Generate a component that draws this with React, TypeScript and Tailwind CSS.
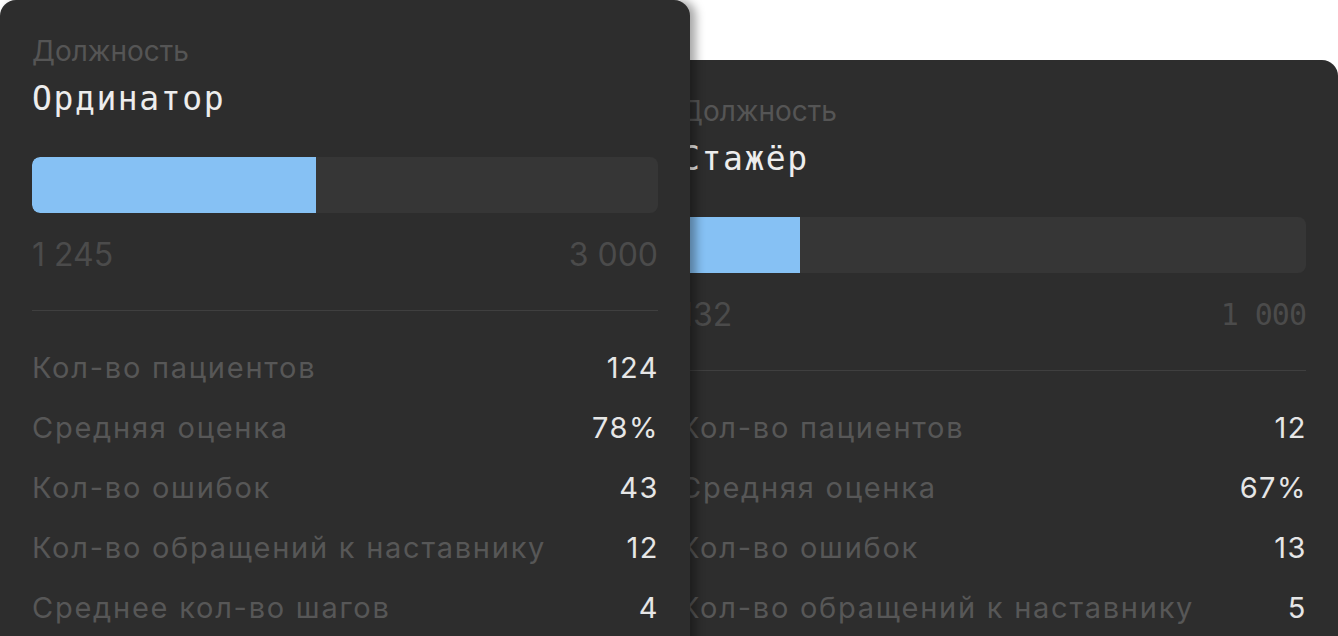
type Stat = { label: string; value: string };

type CardProps = {
  role: string;
  current: string;
  total: string;
  fill: string;
  totalMono?: boolean;
  stats: Stat[];
  className?: string;
};

const inter = "font-['Inter','Noto_Sans',sans-serif]";
const mono = "font-['DejaVu_Sans_Mono','Liberation_Mono',monospace]";

function PositionCard({ role, current, total, fill, totalMono, stats, className }: CardProps) {
  return (
    <div className={`w-[690px] shrink-0 rounded-2xl bg-[#2d2d2d] px-8 pt-[33px] ${className ?? ""}`}>
      {/* заголовок */}
      <div className={`${inter} text-[28px] leading-[36px] text-[#555555]`}>Должность</div>
      <div className={`${mono} mt-[10px] text-[33px] leading-[40px] tracking-[1.6px] text-[#ededed]`}>{role}</div>

      {/* прогресс */}
      <div className="mt-[38px] h-[56px] w-full overflow-hidden rounded-lg bg-[#363636]">
        <div className={`h-full rounded-l-lg bg-[#86c1f4] ${fill}`} />
      </div>
      <div className="mt-[22px] flex items-center justify-between text-[32px] leading-[40px] text-[#4b4b4b]">
        <span className={inter}>{current}</span>
        <span className={totalMono ? `${mono} text-[30px] tracking-[-1px]` : inter}>{total}</span>
      </div>

      <div className="mt-[35px] h-px w-full bg-[#3f3f3f]" />

      {/* показатели */}
      <div className={`${inter} mt-[27px] flex flex-col`}>
        {stats.map(s => (
          <div key={s.label} className="flex h-[60px] items-center justify-between text-[29px] leading-[60px]">
            <span className="tracking-[1.75px] text-[#575757]">{s.label}</span>
            <span className="-mr-[1px] tracking-[1.5px] text-[#e6e6e6]">{s.value}</span>
          </div>
        ))}
      </div>
    </div>
  );
}

export default function App() {
  return (
    <div className="flex h-[636px] w-[1338px] items-start overflow-hidden bg-white">
      <PositionCard
        className="relative z-10 h-[700px] shadow-[6px_0_10px_rgba(0,0,0,0.35)]"
        role="Ординатор"
        current="1 245"
        total="3 000"
        fill="w-[284px]"
        stats={[
          { label: "Кол-во пациентов", value: "124" },
          { label: "Средняя оценка", value: "78%" },
          { label: "Кол-во ошибок", value: "43" },
          { label: "Кол-во обращений к наставнику", value: "12" },
          { label: "Среднее кол-во шагов", value: "4" },
        ]}
      />
      <PositionCard
        className="-ml-[42px] mt-[60px] h-[700px]"
        role="Стажёр"
        current="132"
        total="1 000"
        totalMono
        fill="w-[120px]"
        stats={[
          { label: "Кол-во пациентов", value: "12" },
          { label: "Средняя оценка", value: "67%" },
          { label: "Кол-во ошибок", value: "13" },
          { label: "Кол-во обращений к наставнику", value: "5" },
        ]}
      />
    </div>
  );
}
